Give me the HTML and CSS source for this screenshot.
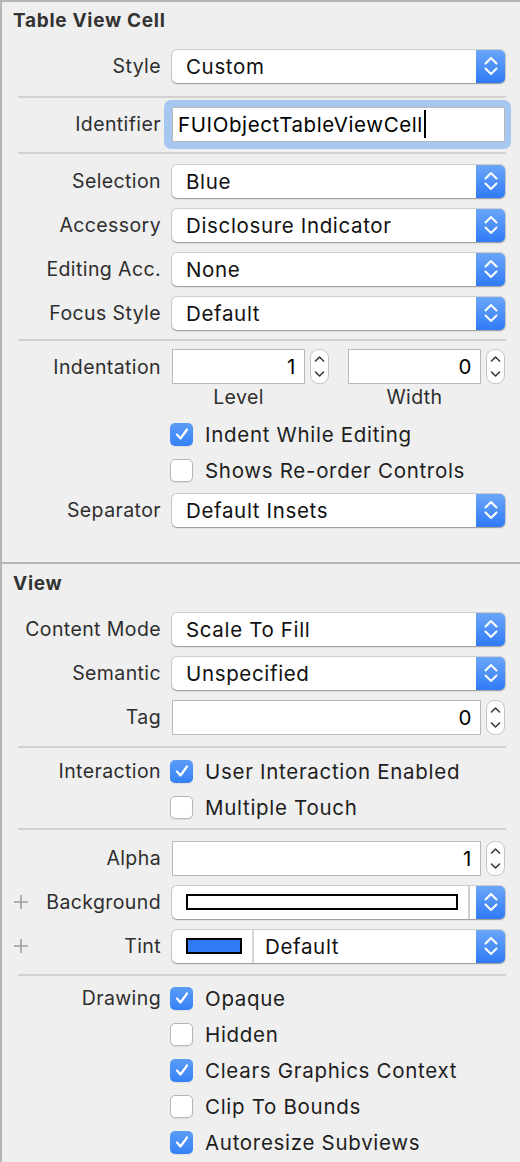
FILE: index.html
```html
<!DOCTYPE html>
<html>
<head>
<meta charset="utf-8">
<link rel="stylesheet" href="styles.css">
</head>
<body>
<div class="panel">
  <section class="section section-cell">
    <h2 class="section-title">Table View Cell</h2>

    <div class="row">
      <span class="label">Style</span>
      <div class="popup"><span class="popup-text">Custom</span><span class="popup-arrow"><svg width="14" height="20" viewBox="0 0 14 20"><path d="M1.5 7.5 L7 2 L12.5 7.5 M1.5 12.5 L7 18 L12.5 12.5" fill="none" stroke="#fff" stroke-width="2" stroke-linecap="round" stroke-linejoin="round"/></svg></span></div>
    </div>
    <div class="sep sep-1"></div>

    <div class="row row-ident">
      <span class="label">Identifier</span>
      <div class="focus-ring"><div class="field field-left">FUIObjectTableViewCell<span class="caret"></span></div></div>
    </div>
    <div class="sep sep-2"></div>

    <div class="row">
      <span class="label">Selection</span>
      <div class="popup"><span class="popup-text">Blue</span><span class="popup-arrow"><svg width="14" height="20" viewBox="0 0 14 20"><path d="M1.5 7.5 L7 2 L12.5 7.5 M1.5 12.5 L7 18 L12.5 12.5" fill="none" stroke="#fff" stroke-width="2" stroke-linecap="round" stroke-linejoin="round"/></svg></span></div>
    </div>
    <div class="row">
      <span class="label">Accessory</span>
      <div class="popup"><span class="popup-text">Disclosure Indicator</span><span class="popup-arrow"><svg width="14" height="20" viewBox="0 0 14 20"><path d="M1.5 7.5 L7 2 L12.5 7.5 M1.5 12.5 L7 18 L12.5 12.5" fill="none" stroke="#fff" stroke-width="2" stroke-linecap="round" stroke-linejoin="round"/></svg></span></div>
    </div>
    <div class="row">
      <span class="label">Editing Acc.</span>
      <div class="popup"><span class="popup-text">None</span><span class="popup-arrow"><svg width="14" height="20" viewBox="0 0 14 20"><path d="M1.5 7.5 L7 2 L12.5 7.5 M1.5 12.5 L7 18 L12.5 12.5" fill="none" stroke="#fff" stroke-width="2" stroke-linecap="round" stroke-linejoin="round"/></svg></span></div>
    </div>
    <div class="row">
      <span class="label">Focus Style</span>
      <div class="popup"><span class="popup-text">Default</span><span class="popup-arrow"><svg width="14" height="20" viewBox="0 0 14 20"><path d="M1.5 7.5 L7 2 L12.5 7.5 M1.5 12.5 L7 18 L12.5 12.5" fill="none" stroke="#fff" stroke-width="2" stroke-linecap="round" stroke-linejoin="round"/></svg></span></div>
    </div>
    <div class="sep sep-3"></div>

    <div class="row row-field">
      <span class="label">Indentation</span>
      <div class="pair">
        <div class="numgroup">
          <div class="field field-num">1</div>
          <span class="stepper"><svg width="19" height="35" viewBox="0 0 19 35"><rect x="0.5" y="0.5" width="18" height="34" rx="8" fill="#fff" stroke="#c4c4c4"/><path d="M5.5 12 L9.5 8 L13.5 12 M5.5 23 L9.5 27 L13.5 23" fill="none" stroke="#3a3a3a" stroke-width="1.6" stroke-linecap="round" stroke-linejoin="round"/></svg></span>
        </div>
        <div class="numgroup">
          <div class="field field-num">0</div>
          <span class="stepper"><svg width="19" height="35" viewBox="0 0 19 35"><rect x="0.5" y="0.5" width="18" height="34" rx="8" fill="#fff" stroke="#c4c4c4"/><path d="M5.5 12 L9.5 8 L13.5 12 M5.5 23 L9.5 27 L13.5 23" fill="none" stroke="#3a3a3a" stroke-width="1.6" stroke-linecap="round" stroke-linejoin="round"/></svg></span>
        </div>
      </div>
    </div>
    <div class="row row-sublabels">
      <span></span>
      <div class="pair">
        <span class="sublabel">Level</span>
        <span class="sublabel">Width</span>
      </div>
    </div>

    <div class="checks checks-indent">
      <div class="row row-check">
        <span class="label"></span>
        <label class="check"><span class="box box-on"><svg width="22" height="22" viewBox="0 0 22 22"><path d="M6 11.5 L9.5 15.5 L16 6.5" fill="none" stroke="#fff" stroke-width="2.2" stroke-linecap="round" stroke-linejoin="round"/></svg></span>Indent While Editing</label>
      </div>
      <div class="row row-check">
        <span class="label"></span>
        <label class="check"><span class="box"></span>Shows Re-order Controls</label>
      </div>
    </div>

    <div class="row">
      <span class="label">Separator</span>
      <div class="popup"><span class="popup-text">Default Insets</span><span class="popup-arrow"><svg width="14" height="20" viewBox="0 0 14 20"><path d="M1.5 7.5 L7 2 L12.5 7.5 M1.5 12.5 L7 18 L12.5 12.5" fill="none" stroke="#fff" stroke-width="2" stroke-linecap="round" stroke-linejoin="round"/></svg></span></div>
    </div>
  </section>

  <section class="section section-view">
    <h2 class="section-title title-view">View</h2>

    <div class="row">
      <span class="label">Content Mode</span>
      <div class="popup"><span class="popup-text">Scale To Fill</span><span class="popup-arrow"><svg width="14" height="20" viewBox="0 0 14 20"><path d="M1.5 7.5 L7 2 L12.5 7.5 M1.5 12.5 L7 18 L12.5 12.5" fill="none" stroke="#fff" stroke-width="2" stroke-linecap="round" stroke-linejoin="round"/></svg></span></div>
    </div>
    <div class="row">
      <span class="label">Semantic</span>
      <div class="popup"><span class="popup-text">Unspecified</span><span class="popup-arrow"><svg width="14" height="20" viewBox="0 0 14 20"><path d="M1.5 7.5 L7 2 L12.5 7.5 M1.5 12.5 L7 18 L12.5 12.5" fill="none" stroke="#fff" stroke-width="2" stroke-linecap="round" stroke-linejoin="round"/></svg></span></div>
    </div>
    <div class="row">
      <span class="label">Tag</span>
      <div class="numgroup">
        <div class="field field-num">0</div>
        <span class="stepper"><svg width="19" height="35" viewBox="0 0 19 35"><rect x="0.5" y="0.5" width="18" height="34" rx="8" fill="#fff" stroke="#c4c4c4"/><path d="M5.5 12 L9.5 8 L13.5 12 M5.5 23 L9.5 27 L13.5 23" fill="none" stroke="#3a3a3a" stroke-width="1.6" stroke-linecap="round" stroke-linejoin="round"/></svg></span>
      </div>
    </div>
    <div class="sep sep-4"></div>

    <div class="row row-check">
      <span class="label">Interaction</span>
      <label class="check"><span class="box box-on"><svg width="22" height="22" viewBox="0 0 22 22"><path d="M6 11.5 L9.5 15.5 L16 6.5" fill="none" stroke="#fff" stroke-width="2.2" stroke-linecap="round" stroke-linejoin="round"/></svg></span>User Interaction Enabled</label>
    </div>
    <div class="row row-check">
      <span class="label"></span>
      <label class="check"><span class="box"></span>Multiple Touch</label>
    </div>
    <div class="sep sep-5"></div>

    <div class="row">
      <span class="label">Alpha</span>
      <div class="numgroup">
        <div class="field field-num">1</div>
        <span class="stepper"><svg width="19" height="35" viewBox="0 0 19 35"><rect x="0.5" y="0.5" width="18" height="34" rx="8" fill="#fff" stroke="#c4c4c4"/><path d="M5.5 12 L9.5 8 L13.5 12 M5.5 23 L9.5 27 L13.5 23" fill="none" stroke="#3a3a3a" stroke-width="1.6" stroke-linecap="round" stroke-linejoin="round"/></svg></span>
      </div>
    </div>
    <div class="row">
      <span class="label label-plus"><svg class="plus" width="14" height="14" viewBox="0 0 14 14"><path d="M7 0 V14 M0 7 H14" stroke="#9d9d9d" stroke-width="1.6"/></svg>Background</span>
      <div class="popup popup-color">
        <span class="well"><span class="swatch swatch-white"></span></span>
        <span class="well-gap"></span>
        <span class="popup-arrow"><svg width="14" height="20" viewBox="0 0 14 20"><path d="M1.5 7.5 L7 2 L12.5 7.5 M1.5 12.5 L7 18 L12.5 12.5" fill="none" stroke="#fff" stroke-width="2" stroke-linecap="round" stroke-linejoin="round"/></svg></span>
      </div>
    </div>
    <div class="row">
      <span class="label label-plus"><svg class="plus" width="14" height="14" viewBox="0 0 14 14"><path d="M7 0 V14 M0 7 H14" stroke="#9d9d9d" stroke-width="1.6"/></svg>Tint</span>
      <div class="popup popup-tint">
        <span class="tint-well"><span class="swatch swatch-blue"></span></span>
        <span class="popup-text">Default</span>
        <span class="popup-arrow"><svg width="14" height="20" viewBox="0 0 14 20"><path d="M1.5 7.5 L7 2 L12.5 7.5 M1.5 12.5 L7 18 L12.5 12.5" fill="none" stroke="#fff" stroke-width="2" stroke-linecap="round" stroke-linejoin="round"/></svg></span>
      </div>
    </div>
    <div class="sep sep-6"></div>

    <div class="row row-check">
      <span class="label">Drawing</span>
      <label class="check"><span class="box box-on"><svg width="22" height="22" viewBox="0 0 22 22"><path d="M6 11.5 L9.5 15.5 L16 6.5" fill="none" stroke="#fff" stroke-width="2.2" stroke-linecap="round" stroke-linejoin="round"/></svg></span>Opaque</label>
    </div>
    <div class="row row-check">
      <span class="label"></span>
      <label class="check"><span class="box"></span>Hidden</label>
    </div>
    <div class="row row-check">
      <span class="label"></span>
      <label class="check"><span class="box box-on"><svg width="22" height="22" viewBox="0 0 22 22"><path d="M6 11.5 L9.5 15.5 L16 6.5" fill="none" stroke="#fff" stroke-width="2.2" stroke-linecap="round" stroke-linejoin="round"/></svg></span>Clears Graphics Context</label>
    </div>
    <div class="row row-check">
      <span class="label"></span>
      <label class="check"><span class="box"></span>Clip To Bounds</label>
    </div>
    <div class="row row-check">
      <span class="label"></span>
      <label class="check"><span class="box box-on"><svg width="22" height="22" viewBox="0 0 22 22"><path d="M6 11.5 L9.5 15.5 L16 6.5" fill="none" stroke="#fff" stroke-width="2.2" stroke-linecap="round" stroke-linejoin="round"/></svg></span>Autoresize Subviews</label>
    </div>
  </section>
</div>
</body>
</html>
```

FILE: styles.css
```css
* { box-sizing: border-box; }

html, body {
  margin: 0;
  padding: 0;
  background: #efefef;
}

body {
  font-family: Inter, "Liberation Sans", sans-serif;
  color: #2c2c2c;
}

.panel {
  width: 520px;
  height: 1162px;
  overflow: hidden;
  border-left: 2px solid #b4b4b4;
  border-top: 2px solid #b4b4b4;
  background: #efefef;
}

.section-cell {
  padding-bottom: 30px;
  border-bottom: 2px solid #b4b4b4;
}

.section-title {
  margin: 0;
  height: 42px;
  line-height: 37px;
  padding-left: 11px;
  font-size: 19px;
  font-weight: 700;
  color: #333;
  letter-spacing: 0.7px;
}

.title-view {
  height: 43px;
  line-height: 39px;
}

.row {
  display: grid;
  grid-template-columns: 159px 1fr;
  column-gap: 11px;
  align-items: center;
  height: 44px;
  padding-right: 15px;
}

.row-ident { height: 52px; }
.row-field { height: 35px; }
.row-sublabels { height: 22px; margin-top: 2px; }
.row-check { height: 36px; }

.label {
  text-align: right;
  font-size: 19.5px;
  letter-spacing: 0.4px;
  color: #2e2e2e;
  white-space: nowrap;
}

.label-plus {
  display: flex;
  justify-content: space-between;
  align-items: center;
}

.plus {
  display: block;
  margin-left: 12px;
  flex: none;
}

.sep {
  height: 2px;
  background: #d2d2d2;
  margin-left: 16px;
  margin-right: 14px;
}
.sep-1 { margin-top: 8px; margin-bottom: 0; }
.sep-2 { margin-top: 2px; margin-bottom: 5px; }
.sep-3 { margin-top: 4px; margin-bottom: 8px; }
.sep-4 { margin-top: 7px; margin-bottom: 5px; }
.sep-5 { margin-top: 3px; margin-bottom: 6px; }
.sep-6 { margin-top: 6px; margin-bottom: 4px; }

.checks-indent { margin-top: 8px; }

/* popup buttons */
.popup {
  display: flex;
  height: 33px;
  background: #fff;
  border-radius: 5px;
  box-shadow: 0 0 0 1px rgba(0, 0, 0, 0.13), 0 1px 1.5px rgba(0, 0, 0, 0.28);
}

.popup-text {
  flex: 1;
  padding-left: 14px;
  font-size: 20.5px;
  letter-spacing: 0.65px;
  line-height: 33px;
  color: #111;
  white-space: nowrap;
}

.popup-arrow {
  width: 29px;
  flex: none;
  display: flex;
  align-items: center;
  justify-content: center;
  border-radius: 0 5px 5px 0;
  background: linear-gradient(#6ba6f9, #2f7bf6);
}

.popup-color .well {
  flex: 1;
  display: flex;
  align-items: center;
  padding-left: 14px;
  padding-right: 10px;
  border-right: 2px solid #d0d0d0;
}

.well-gap { width: 6px; }

.swatch {
  display: block;
  height: 16px;
  border: 2px solid #000;
}

.swatch-white {
  width: 100%;
  background: #fff;
}

.tint-well {
  display: flex;
  align-items: center;
  width: 82px;
  padding-left: 14px;
  border-right: 2px solid #d6d6d6;
}

.swatch-blue {
  width: 56px;
  background: #2f7bf5;
}

.popup-tint .popup-text { padding-left: 11px; }

/* text fields */
.focus-ring {
  margin: 0 -6px 0 -8px;
  padding: 7px 6px 7px 8px;
  border-radius: 7px;
  background: #a6c7f0;
}

.field {
  height: 35px;
  background: #fff;
  border: 1px solid #b9b9b9;
  font-size: 20.5px;
  letter-spacing: 0.6px;
  line-height: 33px;
  color: #000;
}

.field-left {
  padding-left: 5px;
  display: flex;
  align-items: center;
}

.caret {
  display: inline-block;
  width: 2px;
  height: 28px;
  background: #000;
  margin-left: 1px;
}

.field-num {
  flex: 1;
  text-align: right;
  padding-right: 8px;
}

.pair {
  display: grid;
  grid-template-columns: 1fr 1fr;
  column-gap: 19px;
}

.numgroup {
  display: flex;
  align-items: center;
  gap: 5px;
}

.stepper {
  display: block;
  width: 19px;
  height: 35px;
  flex: none;
}
.stepper svg { display: block; }

.sublabel {
  text-align: center;
  font-size: 19.5px;
  letter-spacing: 0.4px;
  line-height: 22px;
  color: #2e2e2e;
  padding-right: 24px;
}

/* checkboxes */
.check {
  display: flex;
  align-items: center;
  gap: 12px;
  margin-left: -2px;
  font-size: 20.5px;
  letter-spacing: 0.7px;
  color: #1e1e1e;
  white-space: nowrap;
}

.box {
  width: 23px;
  height: 23px;
  flex: none;
  border-radius: 5px;
  background: #fff;
  border: 1px solid #b7b7b7;
  box-shadow: 0 1px 1px rgba(0, 0, 0, 0.08);
}

.box-on {
  border: none;
  background: linear-gradient(#5c9cf8, #3482f6);
  display: flex;
  align-items: center;
  justify-content: center;
}
.box-on svg { display: block; }
```
